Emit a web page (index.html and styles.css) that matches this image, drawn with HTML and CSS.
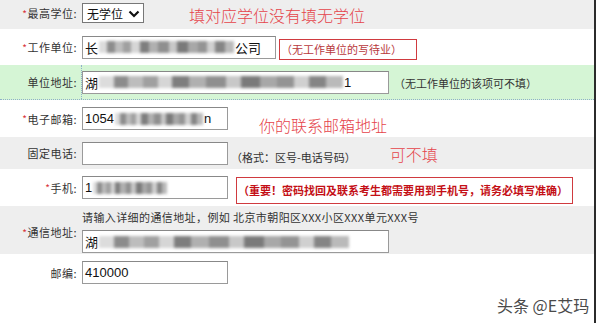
FILE: index.html
```html
<!DOCTYPE html>
<html lang="zh-CN">
<head>
    <meta charset="UTF-8">
    <title>报名信息</title>
    <link rel="stylesheet" href="styles.css">
</head>
<body>
    <div class="page">
        <div class="row gray r1">
            <div class="label"><span class="req">*</span>最高学位:</div>
            <div class="field">
                <div class="select">无学位
                    <svg class="arrow" width="12" height="8" viewBox="0 0 12 8"><path d="M1.5 1.5 L6 6 L10.5 1.5" fill="none" stroke="#111" stroke-width="2.2"/></svg>
                </div>
                <span class="mark mark-r1">填对应学位没有填无学位</span>
            </div>
        </div>

        <div class="row r2">
            <div class="label"><span class="req">*</span>工作单位:</div>
            <div class="field">
                <div class="input w-mid">长<span class="blur b1"></span>公司</div>
                <span class="box box-r2">（无工作单位的写待业）</span>
            </div>
        </div>

        <div class="row green r3">
            <div class="label">单位地址:</div>
            <div class="field dotted">
                <div class="input w-long">湖<span class="blur b2"></span>1</div>
                <span class="hint hint-r3">（无工作单位的该项可不填）</span>
            </div>
        </div>

        <div class="row r4">
            <div class="label"><span class="req">*</span>电子邮箱:</div>
            <div class="field">
                <div class="input w-short">1054<span class="blur b3"></span>n</div>
                <span class="mark mark-r4">你的联系邮箱地址</span>
            </div>
        </div>

        <div class="row gray r5">
            <div class="label">固定电话:</div>
            <div class="field">
                <div class="input w-short"></div>
                <span class="hint hint-r5">（格式：区号-电话号码）</span>
                <span class="mark mark-r5">可不填</span>
            </div>
        </div>

        <div class="row r6">
            <div class="label"><span class="req">*</span>手机:</div>
            <div class="field">
                <div class="input w-short">1<span class="blur b4"></span></div>
                <span class="box box-r6">（重要！密码找回及联系考生都需要用到手机号，请务必填写准确）</span>
            </div>
        </div>

        <div class="row gray r7">
            <div class="label"><span class="req">*</span>通信地址:</div>
            <div class="field column">
                <span class="hint hint-r7">请输入详细的通信地址，例如 北京市朝阳区XXX小区XXX单元XXX号</span>
                <div class="input w-long">湖<span class="blur b5"></span></div>
            </div>
        </div>

        <div class="row r8">
            <div class="label">邮编:</div>
            <div class="field top">
                <div class="input w-short">410000</div>
            </div>
        </div>

        <div class="watermark">头条 @E艾玛</div>
    </div>
</body>
</html>
```

FILE: styles.css
```css
body {
    margin: 0;
    background-color: #ffffff;
    font-family: "Noto Sans CJK SC", "Liberation Sans", sans-serif;
}

.page {
    position: relative;
    width: 594px;
    height: 323px;
    border-right: 2px solid #2b2b2b;
    overflow: hidden;
}

/* one form row: label column + field column */
.row {
    display: grid;
    grid-template-columns: 81px 1fr;
}

.gray {
    background-color: #eeeeee;
}

.green {
    background-color: #d5f5d5;
    border-bottom: 1px dotted #8fb0c8;
}

.r1 { height: 29px; }
.r2 { height: 36px; }
.r3 { height: 34px; }
.r4 { height: 37px; }
.r5 { height: 32px; }
.r6 { height: 37px; }
.r7 { height: 48px; }
.r8 { height: 69px; }

.label {
    display: flex;
    align-items: center;
    justify-content: flex-end;
    padding-right: 4px;
    font-size: 11px;
    color: #333333;
    letter-spacing: 0.5px;
}

.req {
    color: #d9343a;
    font-size: 10px;
}

.field {
    display: flex;
    align-items: center;
    border-left: 1px solid transparent;
}

.field.dotted {
    border-left: 1px dotted #8fb0c8;
}

.field.column {
    flex-direction: column;
    align-items: flex-start;
    justify-content: center;
    gap: 5px;
    padding-top: 2px;
}

.field.top {
    align-items: flex-start;
    padding-top: 7px;
}

.r1 .label,
.r1 .field {
    padding-bottom: 3px;
}

.r7 .label {
    padding-top: 4px;
}

.r8 .label {
    align-items: flex-start;
    padding-top: 11px;
}

/* fake select box */
.select {
    display: flex;
    align-items: center;
    gap: 5px;
    box-sizing: border-box;
    width: 62px;
    height: 20px;
    padding-left: 4px;
    border: 1px solid #777777;
    background-color: #ffffff;
    font-size: 12px;
    color: #111111;
}

.arrow {
    margin-top: 1px;
}

/* text inputs */
.input {
    display: flex;
    align-items: center;
    box-sizing: border-box;
    height: 23px;
    padding-left: 2px;
    border: 1px solid #9a9a9a;
    border-top-color: #888888;
    background-color: #ffffff;
    font-family: "Liberation Sans", "Noto Sans CJK SC", sans-serif;
    font-size: 13px;
    color: #111111;
    white-space: nowrap;
    overflow: hidden;
}

.w-short { width: 146px; }
.w-mid { width: 194px; }
.w-long { width: 307px; }

/* mosaic where the original data was hidden */
.blur {
    display: inline-block;
    height: 12px;
    margin: 0 1px;
    filter: blur(1.6px);
    background: linear-gradient(90deg,
        #dcdcdc 0 6%, #8c8c8c 6% 12%, #bdbdbd 12% 18%, #a0a0a0 18% 24%,
        #d6d6d6 24% 30%, #7e7e7e 30% 37%, #b0b0b0 37% 44%, #8f8f8f 44% 52%,
        #c8c8c8 52% 58%, #7a7a7a 58% 66%, #a8a8a8 66% 73%, #949494 73% 80%,
        #d0d0d0 80% 86%, #858585 86% 93%, #bababa 93% 100%);
}

.b1 { width: 135px; }
.b2 { width: 244px; }
.b3 { width: 88px; }
.b4 { width: 74px; }
.b5 { width: 250px; }

/* red handwritten-style remarks */
.mark {
    font-size: 16px;
    font-weight: 300;
    color: #e5434a;
    white-space: nowrap;
}

.mark-r1 {
    margin-left: 45px;
    align-self: flex-end;
    margin-bottom: -1px;
}

.mark-r4 {
    margin-left: 31px;
    align-self: flex-end;
    margin-bottom: 0;
}

.mark-r5 {
    margin-left: 34px;
    margin-top: 1px;
}

/* red framed notes */
.box {
    box-sizing: border-box;
    display: flex;
    align-items: center;
    border: 1px solid #d03a3f;
    font-size: 11px;
    white-space: nowrap;
}

.box-r2 {
    height: 21px;
    margin-left: 3px;
    margin-top: 4px;
    padding: 0 14px 0 1px;
    color: #b8383c;
}

.box-r6 {
    height: 27px;
    margin-left: 8px;
    margin-top: 5px;
    padding: 0 4px 0 1px;
    color: #c40f16;
    font-weight: bold;
}

.hint {
    font-size: 11px;
    color: #333333;
    white-space: nowrap;
}

.hint-r3 {
    margin-left: 5px;
    margin-top: 2px;
}

.hint-r5 {
    margin-left: 3px;
    align-self: flex-end;
    margin-bottom: 4px;
}

.hint-r7 {
    letter-spacing: 0.4px;
}

.watermark {
    position: absolute;
    left: 497px;
    top: 293px;
    font-size: 16px;
    color: #4a4a4a;
    text-shadow: 0 0 2px #ffffff, 0 0 2px #ffffff;
    white-space: nowrap;
}
```
